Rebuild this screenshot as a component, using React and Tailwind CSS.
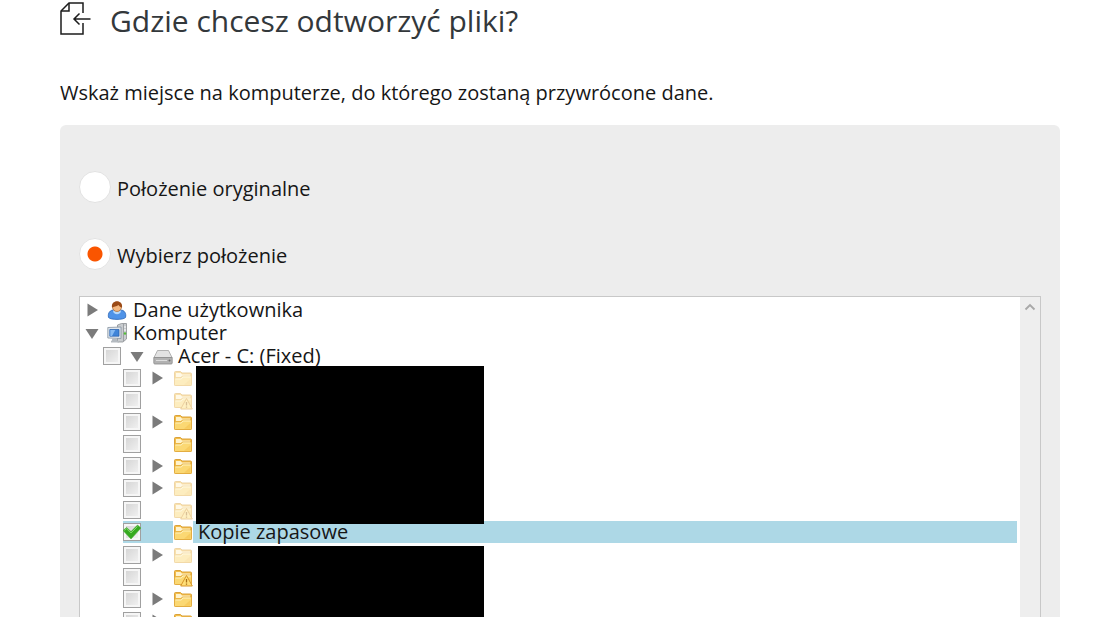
import { useState } from "react";

// Folder rows under the drive. "faded" folders are system/hidden ones,
// "warn" marks folders that can't be fully accessed.
const FOLDERS = [
  { id: 1, expandable: true, faded: true },
  { id: 2, faded: true, warn: true },
  { id: 3, expandable: true },
  { id: 4 },
  { id: 5, expandable: true },
  { id: 6, expandable: true, faded: true },
  { id: 7, faded: true, warn: true },
  { id: 8, label: "Kopie zapasowe" },
  { id: 9, expandable: true, faded: true },
  { id: 10, warn: true },
  { id: 11, expandable: true },
  { id: 12, expandable: true },
];

function RestoreIcon() {
  return (
    <svg width="32" height="34" viewBox="0 0 32 34" fill="none" stroke="#1c1c1c" strokeWidth="1.5" aria-hidden="true">
      <path d="M23 11V1H9L1 9v23h22V21" />
      <path d="M9 1v8H1" />
      <path d="M30.500 17H14M19.500 11.500L14 17l5.500 5.500" />
    </svg>
  );
}

function UserIcon() {
  return (
    <svg width="20" height="22" viewBox="0 0 20 22" aria-hidden="true">
      <path d="M1.500 18.500c-1-5 2-7.500 5-7.500h7c4 0 6 3.500 5 7.500-2 2.500-15 2.500-17 0z" fill="#4f93e8" stroke="#2b66b8" strokeWidth=".8" />
      <path d="M6 11.500c0 5 8 5 8 0z" fill="#b5d8fb" />
      <ellipse cx="10" cy="8" rx="4.500" ry="4.500" fill="#f4b780" stroke="#a8652c" strokeWidth=".7" />
      <path d="M5 8.500c-1.500-8.500 11.500-8.500 10 0-1.500 0-2.500-1-3.500-2.500-2 1.500-5 1.500-6.500 2.500z" fill="#9b4a16" />
    </svg>
  );
}

function ComputerIcon() {
  return (
    <svg width="20" height="22" viewBox="0 0 20 22" aria-hidden="true">
      <path d="M10.500 3l4-1.500h5V17l-3.500 3h-5.500z" fill="#c9cccf" stroke="#8b8f93" strokeWidth=".8" />
      <path d="M16.500 2v17" stroke="#92969a" strokeWidth=".8" />
      <path d="M17 5h2M17 8h2" stroke="#fff" />
      <circle cx="18" cy="11.500" r="1.200" fill="#55bd38" />
      <path d="M.8 5.500L14 5v11.500L.8 16z" fill="#dfe5ec" stroke="#8793a0" strokeWidth=".8" />
      <path d="M2.800 7.500H12v6.700H2.800z" fill="#3f84d8" stroke="#245baa" strokeWidth=".7" />
      <path d="M3.300 8h5l-3.300 6H3.300z" fill="#86baf2" />
      <path d="M5.500 16.500h4l1 2.500h-6zM4 19h8v1.500H4z" fill="#b4bac0" />
    </svg>
  );
}

function DriveIcon() {
  return (
    <svg width="20" height="22" viewBox="0 0 20 22" aria-hidden="true">
      <path d="M4.500 5.500h11L19 12.500H1z" fill="#e2e2e2" stroke="#a2a2a2" strokeWidth=".8" />
      <path d="M.8 12.500h18.400V18q0 1-1 1H1.800q-1 0-1-1z" fill="#b2b2b2" stroke="#8c8c8c" strokeWidth=".8" />
      <path d="M3 15.500h11" stroke="#dedede" />
      <circle cx="16.500" cy="15.500" r="1" fill="#707070" />
    </svg>
  );
}

function FolderIcon({ faded, warn }) {
  return (
    <svg width="20" height="20" viewBox="0 0 20 20" className={faded ? "opacity-45" : ""} aria-hidden="true">
      <path d="M1.500 16.500V4.500q0-1 1-1h5l1.500 1.500h8.500q1 0 1 1v10.500q0 1-1 1h-15q-1 0-1-1z" fill="#f3bd49" stroke="#dba23a" />
      <path d="M3 5h4.500L9 6.500h8V9H3z" fill="#fff3cc" />
      <path d="M1.500 16.500V10h6.300L9.300 8h9.200v8.500q0 1-1 1h-15q-1 0-1-1z" fill="#fbd873" stroke="#e2ab3e" strokeWidth=".9" />
      <path d="M2.500 11h5.800l1.500-2H17.500" stroke="#fff2bf" fill="none" />
      <path d="M11 16.800h6.500V11z" fill="#f3bd49" opacity=".5" />
      {warn && (
        <>
          <path d="M13.500 8.500L19.300 19H7.700z" fill="#ffdf78" stroke="#d8962a" strokeLinejoin="round" />
          <path d="M13.500 12v3.500M13.500 16.500v1.300" stroke="#a87018" strokeWidth="1.300" />
        </>
      )}
    </svg>
  );
}

function Expander({ open, wide }) {
  return (
    <button
      type="button"
      aria-expanded={!!open}
      aria-label={open ? "Zwiń" : "Rozwiń"}
      className={`flex h-full shrink-0 items-center justify-center ${wide ? "w-8" : "mr-[3px] w-6"}`}
    >
      <svg width="14" height="14" viewBox="0 0 14 14" fill="#7b7b7b" aria-hidden="true">
        {open ? <path d="M.5 3h13L7 13z" /> : <path d="M2.500 .5v13L13 7z" />}
      </svg>
    </button>
  );
}

function TreeCheckbox({ label, checked, onChange }) {
  return (
    <span className="relative flex shrink-0">
      <input
        type="checkbox"
        aria-label={label}
        checked={checked}
        onChange={onChange}
        className="size-[18px] appearance-none border border-[#a0a0a0] bg-linear-to-br from-[#d2d2d2] to-[#f4f4f4] shadow-[inset_0_0_0_2px_#f6f6f6]"
      />
      {checked && (
        <svg width="18" height="18" viewBox="0 0 18 18" className="pointer-events-none absolute inset-0" aria-hidden="true">
          <path d="M0 7.500L3.500 4.500l4.500 4 6.500-6.500L18 5 8 16z" fill="#35a91f" stroke="#4fae3d" strokeWidth=".6" />
          <path d="M1.500 7.500L3.500 5.700 8 10l6.500-6.500" stroke="#7bd765" fill="none" />
        </svg>
      )}
    </span>
  );
}

function Radio({ label, checked, onChange }) {
  return (
    <label className="flex h-8 items-center gap-1.5">
      <input
        type="radio"
        name="location"
        checked={checked}
        onChange={onChange}
        className="size-8 shrink-0 appearance-none rounded-full border border-[#e2e2e2] bg-white checked:bg-[radial-gradient(circle,#fa5500_7px,#ffffff_8px)]"
      />
      <span className="pt-1">{label}</span>
    </label>
  );
}

function LocationTree() {
  const [drive, setDrive] = useState(false);
  const [selected, setSelected] = useState([8]);

  const toggle = (id) =>
    setSelected((s) => (s.includes(id) ? s.filter((x) => x !== id) : [...s, id]));

  return (
    <div className="flex border border-[#c8c8c8] bg-white">
      <div className="relative min-w-0 flex-1 pt-px pr-[3px] leading-[22px]">
        <div className="flex h-[23px] items-center">
          <Expander />
          <UserIcon />
          <span className="ml-1.5">Dane użytkownika</span>
        </div>
        <div className="flex h-[23px] items-center">
          <Expander open />
          <ComputerIcon />
          <span className="ml-1.5">Komputer</span>
        </div>
        <div className="ml-[23px] flex h-[23px] items-center">
          <TreeCheckbox label="Acer - C: (Fixed)" checked={drive} onChange={() => setDrive(!drive)} />
          <Expander open wide />
          <DriveIcon />
          <span className="ml-[5px]">Acer - C: (Fixed)</span>
        </div>

        {FOLDERS.map((f) => {
          const checked = selected.includes(f.id);
          return (
            <div
              key={f.id}
              className={`ml-[43px] flex h-[22px] items-center ${checked ? "mb-px bg-[#add8e6]" : ""}`}
            >
              <TreeCheckbox label={f.label || `Folder ${f.id}`} checked={checked} onChange={() => toggle(f.id)} />
              {f.expandable ? <Expander wide /> : <span className="w-8 shrink-0" />}
              <span className="flex h-full items-center bg-white">
                <FolderIcon faded={f.faded} warn={f.warn} />
              </span>
              <span className="ml-[5px]">{f.label}</span>
            </div>
          );
        })}

        {/* Covers over the private folder names */}
        <div className="absolute top-[69px] left-[116px] h-[158px] w-[288px] bg-black" />
        <div className="absolute top-[249px] left-[118px] bottom-0 w-[286px] bg-black" />
      </div>

      {/* Scrollbar track */}
      <div className="w-5 shrink-0 bg-[#eeeeee]">
        <button type="button" aria-label="Przewiń w górę" className="flex h-5 w-full items-center justify-center">
          <svg width="12" height="8" viewBox="0 0 12 8" fill="none" stroke="#a8a8a8" strokeWidth="1.800" aria-hidden="true">
            <path d="M1.500 6.500L6 2l4.500 4.500" />
          </svg>
        </button>
      </div>
    </div>
  );
}

export default function App() {
  const [location, setLocation] = useState("custom");

  return (
    <main className="flex h-screen flex-col overflow-hidden bg-white pr-[53px] pl-[60px] font-['Open_Sans',sans-serif] text-xl text-[#161616]">
      <header className="flex shrink-0 items-start gap-[18px] pt-0.5">
        <RestoreIcon />
        <h1 className="text-3xl leading-[38px] text-[#33383b]">Gdzie chcesz odtworzyć pliki?</h1>
      </header>

      <p className="mt-[39px] shrink-0 leading-7">Wskaż miejsce na komputerze, do którego zostaną przywrócone dane.</p>

      <section className="mt-[18px] min-h-0 flex-1 overflow-hidden rounded-t-md bg-[#ededed] px-[19px] pt-[46px]">
        <div className="flex flex-col gap-[35px]">
          <Radio
            label="Położenie oryginalne"
            checked={location === "original"}
            onChange={() => setLocation("original")}
          />
          <Radio
            label="Wybierz położenie"
            checked={location === "custom"}
            onChange={() => setLocation("custom")}
          />
        </div>
        <div className="mt-[26px]">
          <LocationTree />
        </div>
      </section>
    </main>
  );
}
